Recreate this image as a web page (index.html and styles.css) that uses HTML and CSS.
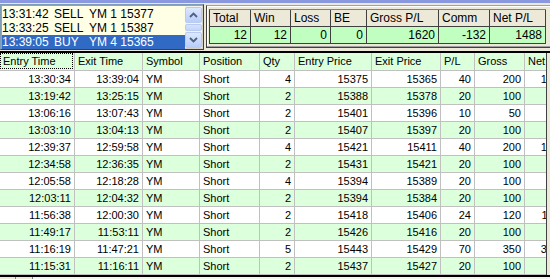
FILE: index.html
```html
<!DOCTYPE html>
<html>
<head>
<meta charset="utf-8">
<link rel="stylesheet" href="styles.css">
</head>
<body>
<div class="app">
  <div class="stripe"></div>
  <div class="top">
    <div class="listbox">
      <div class="items">
        <div class="item"><span class="t">13:31:42</span><span class="a">SELL</span><span class="s">YM 1 15377</span></div>
        <div class="item"><span class="t">13:33:25</span><span class="a">SELL</span><span class="s">YM 1 15387</span></div>
        <div class="item sel"><span class="t">13:39:05</span><span class="a">BUY</span><span class="s">YM 4 15365</span></div>
      </div>
      <div class="vscroll">
        <div class="sbtn"><svg width="9" height="6" viewBox="0 0 9 6"><path d="M1 5 L4.5 1.5 L8 5" fill="none" stroke="#4d6185" stroke-width="1.8"/></svg></div>
        <div class="thumb"></div>
        <div class="sbtn"><svg width="9" height="6" viewBox="0 0 9 6"><path d="M1 1 L4.5 4.5 L8 1" fill="none" stroke="#4d6185" stroke-width="1.8"/></svg></div>
      </div>
    </div>
    <div class="summary">
      <div class="sgrid">
        <div class="sh">Total</div><div class="sh">Win</div><div class="sh">Loss</div><div class="sh">BE</div><div class="sh">Gross P/L</div><div class="sh">Comm</div><div class="sh">Net P/L</div>
        <div class="sd">12</div><div class="sd">12</div><div class="sd">0</div><div class="sd">0</div><div class="sd">1620</div><div class="sd">-132</div><div class="sd">1488</div>
      </div>
    </div>
  </div>
  <div class="main">
    <div class="gridwrap">
      <div class="grid">
        <div class="row head">
          <div class="c"><span class="focus">Entry Time</span></div><div class="c">Exit Time</div><div class="c">Symbol</div><div class="c">Position</div><div class="c">Qty</div><div class="c">Entry Price</div><div class="c">Exit Price</div><div class="c">P/L</div><div class="c">Gross</div><div class="c">Net</div>
        </div>
        <div class="row"><div class="c r">13:30:34</div><div class="c r">13:39:04</div><div class="c">YM</div><div class="c">Short</div><div class="c r">4</div><div class="c r">15375</div><div class="c r">15365</div><div class="c r">40</div><div class="c r">200</div><div class="c r">184</div></div>
        <div class="row alt"><div class="c r">13:19:42</div><div class="c r">13:25:15</div><div class="c">YM</div><div class="c">Short</div><div class="c r">2</div><div class="c r">15388</div><div class="c r">15378</div><div class="c r">20</div><div class="c r">100</div><div class="c r">92</div></div>
        <div class="row"><div class="c r">13:06:16</div><div class="c r">13:07:43</div><div class="c">YM</div><div class="c">Short</div><div class="c r">2</div><div class="c r">15401</div><div class="c r">15396</div><div class="c r">10</div><div class="c r">50</div><div class="c r">42</div></div>
        <div class="row alt"><div class="c r">13:03:10</div><div class="c r">13:04:13</div><div class="c">YM</div><div class="c">Short</div><div class="c r">2</div><div class="c r">15407</div><div class="c r">15397</div><div class="c r">20</div><div class="c r">100</div><div class="c r">92</div></div>
        <div class="row"><div class="c r">12:39:37</div><div class="c r">12:59:58</div><div class="c">YM</div><div class="c">Short</div><div class="c r">4</div><div class="c r">15421</div><div class="c r">15411</div><div class="c r">40</div><div class="c r">200</div><div class="c r">184</div></div>
        <div class="row alt"><div class="c r">12:34:58</div><div class="c r">12:36:35</div><div class="c">YM</div><div class="c">Short</div><div class="c r">2</div><div class="c r">15431</div><div class="c r">15421</div><div class="c r">20</div><div class="c r">100</div><div class="c r">92</div></div>
        <div class="row"><div class="c r">12:05:58</div><div class="c r">12:18:28</div><div class="c">YM</div><div class="c">Short</div><div class="c r">4</div><div class="c r">15394</div><div class="c r">15389</div><div class="c r">20</div><div class="c r">100</div><div class="c r">84</div></div>
        <div class="row alt"><div class="c r">12:03:11</div><div class="c r">12:04:32</div><div class="c">YM</div><div class="c">Short</div><div class="c r">2</div><div class="c r">15394</div><div class="c r">15384</div><div class="c r">20</div><div class="c r">100</div><div class="c r">92</div></div>
        <div class="row"><div class="c r">11:56:38</div><div class="c r">12:00:30</div><div class="c">YM</div><div class="c">Short</div><div class="c r">2</div><div class="c r">15418</div><div class="c r">15406</div><div class="c r">24</div><div class="c r">120</div><div class="c r">112</div></div>
        <div class="row alt"><div class="c r">11:49:17</div><div class="c r">11:53:11</div><div class="c">YM</div><div class="c">Short</div><div class="c r">2</div><div class="c r">15426</div><div class="c r">15416</div><div class="c r">20</div><div class="c r">100</div><div class="c r">92</div></div>
        <div class="row"><div class="c r">11:16:19</div><div class="c r">11:47:21</div><div class="c">YM</div><div class="c">Short</div><div class="c r">5</div><div class="c r">15443</div><div class="c r">15429</div><div class="c r">70</div><div class="c r">350</div><div class="c r">330</div></div>
        <div class="row alt"><div class="c r">11:15:31</div><div class="c r">11:16:11</div><div class="c">YM</div><div class="c">Short</div><div class="c r">2</div><div class="c r">15437</div><div class="c r">15427</div><div class="c r">20</div><div class="c r">100</div><div class="c r">92</div></div>
      </div>
      <div class="side"></div>
    </div>
    <div class="hbar"><div class="hb1"></div><div class="hb2"></div><div class="hb3"></div></div>
  </div>
</div>
</body>
</html>
```

FILE: styles.css
```css
* { box-sizing: border-box; }
html, body { margin: 0; padding: 0; }
body {
  width: 550px;
  height: 279px;
  overflow: hidden;
  background: #ece9d8;
  font-family: "Liberation Sans", Arial, sans-serif;
  color: #000;
}
.app { width: 550px; height: 279px; overflow: hidden; }
.stripe { height: 3px; background: #8a98e0; }

.top { display: flex; height: 48px; }

.listbox {
  width: 205px;
  height: 46px;
  margin-top: 1px;
  border-top: 1px solid #7f9db9;
  border-left: 1px solid #7f9db9;
  border-right: 1px solid #404040;
  border-bottom: 1px solid #404040;
  box-shadow: inset 1px 1px 0 #a0a0a0, inset -1px -1px 0 #d4d0c8;
  background: #ffffe6;
  display: flex;
  padding: 1px;
  font-size: 12px;
}
.items { flex: 1; padding-top: 1px; }
.item { height: 14px; line-height: 14px; display: flex; white-space: nowrap; }
.item .t { width: 52px; }
.item .a { width: 35px; }
.item .s { flex: 1; }
.item.sel { background: #316ac5; color: #fff; }

.vscroll {
  width: 17px;
  background: #f4f3ee;
  display: flex;
  flex-direction: column;
  gap: 1px;
  padding-top: 1px;
}
.sbtn {
  height: 16px;
  border: 1px solid #b8cbf3;
  border-radius: 2px;
  background: linear-gradient(#dde8fe, #b9cdf8);
  display: flex;
  align-items: center;
  justify-content: center;
}
.thumb {
  height: 8px;
  border: 1px solid #b8cbf3;
  border-radius: 2px;
  background: linear-gradient(#d6e2fd, #c3d4fa);
}

.summary {
  flex: 1;
  margin: 2px 0 3px 2px;
  border-top: 1px solid #a0a0a0;
  border-left: 1px solid #404040;
  border-bottom: 1px solid #404040;
  box-shadow: inset 0 -1px 0 #a0a0a0, inset 1px 1px 0 #fff;
  padding: 3px 4px 0 2px;
}
.sgrid {
  display: grid;
  grid-template-columns: 41px 40px 40px 36px 72px 51px 56px;
  grid-template-rows: 17px 17px;
  border-left: 1px solid #404040;
  border-top: 1px solid #808080;
  font-size: 12px;
}
.sh {
  background: #ece9d8;
  border-right: 1px solid #404040;
  border-bottom: 1px solid #404040;
  padding-left: 3px;
  line-height: 16px;
  white-space: nowrap;
}
.sd {
  background: #c0ffc0;
  border-right: 1px solid #404040;
  border-bottom: 1px solid #404040;
  text-align: right;
  padding-right: 3px;
  line-height: 16px;
}

.main { border-top: 2px solid #000; }
.gridwrap { display: flex; height: 222px; }
.grid { width: 546px; flex: none; overflow: hidden; background: #fff; }
.side { flex: 1; border-left: 1px solid #404040; background: #ece9d8; }
.row {
  display: grid;
  grid-template-columns: 75px 68px 57px 60px 35px 77px 69px 34px 50px 38px;
  height: 17px;
  font-size: 11px;
  line-height: 16px;
  background: #fff;
}
.row.alt, .row.head { background: #dcffdc; }
.row.head { height: 18px; line-height: 17px; }
.c {
  border-right: 1px solid #c0c0c0;
  border-bottom: 1px solid #c0c0c0;
  padding: 0 3px;
  white-space: nowrap;
  overflow: hidden;
}
.c.r { text-align: right; }
.head .c:first-child { padding: 0; }
.focus {
  display: block;
  height: 16px;
  line-height: 14px;
  margin: 0 1px 0 0;
  padding-left: 2px;
  border: 1px dotted #000;
}

.hbar {
  height: 2px;
  border-top: 2px solid #000;
  display: flex;
}
.hbar div { height: 2px; }
.hb1 { width: 16px; border-right: 1px solid #808080; }
.hb2 { width: 17px; border-right: 1px solid #808080; }
.hb3 { flex: 1; background: #f4f3ee; }
```
